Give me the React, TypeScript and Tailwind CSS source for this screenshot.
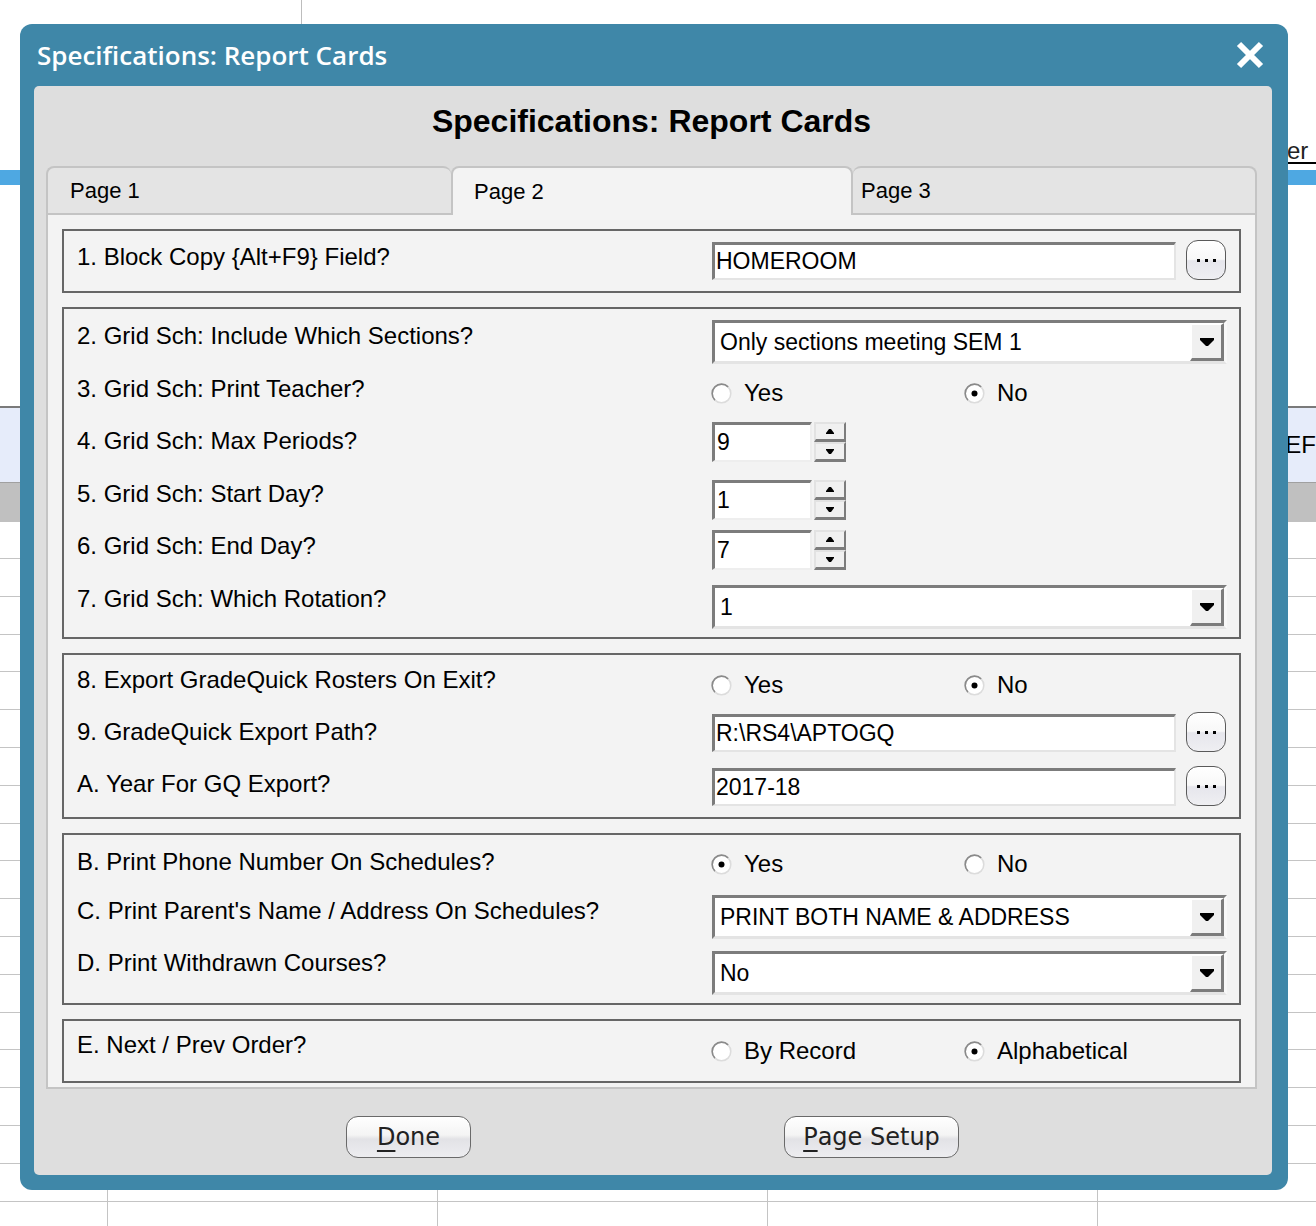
import React from "react";

const LABEL =
  "font-['Liberation_Sans',Arial,Helvetica,sans-serif] text-[24px] leading-[28px] text-black whitespace-nowrap";
const INPUT_TXT =
  "font-['Liberation_Sans',Arial,Helvetica,sans-serif] text-[23px] leading-none text-black whitespace-nowrap";

function DownArrow() {
  return (
    <svg width="14" height="8" viewBox="0 0 14 8">
      <polygon points="0,0 14,0 14,2 8,8 6,8 0,2" fill="#000" />
    </svg>
  );
}

function TextBox({ value, className }: { value: string; className: string }) {
  return (
    <div
      className={`flex h-[38px] items-center bg-white pl-[1px] border-t-[3px] border-l-[3px] border-t-[#7c7c7c] border-l-[#7c7c7c] border-b-2 border-r-2 border-b-[#e4e4e4] border-r-[#e4e4e4] ${INPUT_TXT} ${className}`}
    >
      {value}
    </div>
  );
}

function Ellipsis() {
  return (
    <div className="flex h-[40px] w-[40px] items-center justify-center gap-[5px] rounded-[12px] border-[1.5px] border-[#5a5a5a] bg-[linear-gradient(to_bottom,#ffffff_0%,#f8f8f8_48%,#e6e6ec_52%,#efeff2_100%)]">
      <span className="h-[3px] w-[3px] bg-black" />
      <span className="h-[3px] w-[3px] bg-black" />
      <span className="h-[3px] w-[3px] bg-black" />
    </div>
  );
}

function InputWithButton({ value }: { value: string }) {
  return (
    <div className="flex items-end gap-[10px]">
      <TextBox value={value} className="w-[464px]" />
      <Ellipsis />
    </div>
  );
}

function Dropdown({ value }: { value: string }) {
  return (
    <div className="flex h-[44px] w-[515px] border-t-[3px] border-l-[3px] border-t-[#7c7c7c] border-l-[#7c7c7c] border-b-[3px] border-r-[3px] border-b-[#e4e4e4] border-r-[#f8f8f8]">
      <div className={`flex flex-1 items-center bg-white pl-[5px] ${INPUT_TXT}`}>{value}</div>
      <div className="flex w-[34px] items-center justify-center bg-[#f0f0f0] border-t-2 border-l-2 border-t-white border-l-white border-r-[3px] border-b-[3px] border-r-[#7c7c7c] border-b-[#7c7c7c]">
        <DownArrow />
      </div>
    </div>
  );
}

function SpinBtn({ up }: { up: boolean }) {
  return (
    <div className="flex h-[20px] w-[32px] items-center justify-center bg-[#f0f0f0] border-t-2 border-l-2 border-t-[#e2e2e2] border-l-[#e2e2e2] border-r-2 border-b-[3px] border-r-[#7c7c7c] border-b-[#7c7c7c]">
      <svg width="8" height="5" viewBox="0 0 8 5">
        {up ? (
          <polygon points="3,0 5,0 8,4 8,5 0,5 0,4" fill="#000" />
        ) : (
          <polygon points="0,0 8,0 8,1 5,5 3,5 0,1" fill="#000" />
        )}
      </svg>
    </div>
  );
}

function Spinner({ value }: { value: string }) {
  return (
    <div className="flex gap-[2px]">
      <div className={`flex h-[40px] w-[100px] items-center bg-white pl-[2px] border-t-[3px] border-l-[3px] border-t-[#7c7c7c] border-l-[#7c7c7c] border-b-2 border-r-2 border-b-[#eeeeee] border-r-[#eeeeee] ${INPUT_TXT}`}>
        {value}
      </div>
      <div className="flex flex-col">
        <SpinBtn up />
        <SpinBtn up={false} />
      </div>
    </div>
  );
}

function Radio({ checked }: { checked: boolean }) {
  return (
    <svg width="21" height="21" viewBox="0 0 21 21" className="shrink-0">
      <circle cx="10.5" cy="10.5" r="9.3" fill="#ffffff" stroke="#dcdcdc" strokeWidth="1.6" />
      <path d="M3.9 17.1 A9.3 9.3 0 0 1 17.1 3.9" fill="none" stroke="#8a8a8a" strokeWidth="1.6" />
      {checked && <circle cx="10.5" cy="10.5" r="3" fill="#000" />}
    </svg>
  );
}

function RadioPair({
  a,
  b,
  which,
}: {
  a: string;
  b: string;
  which: 0 | 1;
}) {
  return (
    <div className="-ml-[1px] flex h-[28px] items-center">
      <div className="flex w-[253px] items-center gap-[12px]">
        <Radio checked={which === 0} />
        <span className={LABEL}>{a}</span>
      </div>
      <div className="flex items-center gap-[12px]">
        <Radio checked={which === 1} />
        <span className={LABEL}>{b}</span>
      </div>
    </div>
  );
}

function BigButton({ first, rest, className }: { first: string; rest: string; className: string }) {
  return (
    <div
      className={`flex h-[42px] items-center justify-center rounded-[12px] border-[1.5px] border-[#6a6a6a] bg-[linear-gradient(to_bottom,#ffffff_0%,#f4f4f4_45%,#e2e2e6_55%,#ededf0_100%)] font-['DejaVu_Sans',Verdana,sans-serif] text-[24px] leading-none text-[#222] ${className}`}
    >
      <span className="underline decoration-[1.5px] underline-offset-[5px]">{first}</span>
      <span>{rest}</span>
    </div>
  );
}

const BOX = "border-2 border-[#666666] bg-[#f3f3f3] pl-[13px]";

export default function App() {
  const gridRows = Array.from({ length: 18 });
  return (
    <div className="relative h-[1226px] w-[1316px] overflow-hidden bg-white font-['Liberation_Sans',Arial,sans-serif]">
      {/* background page */}
      <div className="flex h-[140px]">
        <div className="w-[301px]" />
        <div className="h-[24px] w-px bg-[#bdbdbd]" />
      </div>
      <div className="flex h-[24px]">
        <div className="w-[1287px]" />
        <div className="flex-1 border-b-2 border-black text-[24px] leading-[22px] text-[#222]">er</div>
      </div>
      <div className="h-[6px]" />
      <div className="h-[15px] bg-[#4ea8e2]" />
      <div className="h-[221px]" />
      <div className="h-[2px] bg-[#7a7a7a]" />
      <div className="flex h-[74px] items-center bg-[#e6ecfa]">
        <div className="w-[1281px]" />
        <span className="text-[24px] leading-none text-black">IEF</span>
      </div>
      <div className="h-px bg-[#a0a0a0]" />
      <div className="h-[39px] bg-[#c0c0c0]" />
      <div className="h-[36px]" />
      {gridRows.map((_, i) => (
        <div
          key={i}
          className="grid h-[37.8px] grid-cols-[108px_330px_330px_330px_1fr] border-t border-[#c4c4c4]"
        >
          <div className="border-r border-[#c4c4c4]" />
          <div className="border-r border-[#c4c4c4]" />
          <div className="border-r border-[#c4c4c4]" />
          <div className="border-r border-[#c4c4c4]" />
          <div />
        </div>
      ))}

      {/* dialog window */}
      <div className="absolute left-[20px] top-[24px] flex h-[1166px] w-[1268px] flex-col rounded-[12px] bg-[#3f87a8] pb-[15px] pl-[14px] pr-[16px]">
        <div className="flex h-[62px] shrink-0 items-center justify-between pl-[3px] pr-[8px]">
          <span className="font-['Open_Sans',sans-serif] text-[26px] font-semibold leading-none text-white">
            Specifications: Report Cards
          </span>
          <svg width="28" height="28" viewBox="0 0 28 28">
            <path d="M3 3 L25 25 M25 3 L3 25" stroke="#ffffff" strokeWidth="6" strokeLinecap="butt" />
          </svg>
        </div>

        <div className="flex h-[1089px] flex-col rounded-[5px] bg-[#dedede] pl-[12px] pr-[15px]">
          <div className="flex h-[80px] shrink-0 justify-center pt-[19px]">
            <span className="text-[32px] font-bold leading-[32px] text-black">Specifications: Report Cards</span>
          </div>

          {/* tabs */}
          <div className="flex h-[49px] shrink-0">
            <div className="flex w-[405px] items-center rounded-t-[8px] border-2 border-r-0 border-[#c4c4c4] bg-[#e4e4e4] pl-[22px] text-[22px] leading-none text-black">
              Page 1
            </div>
            <div className="flex w-[402px] items-center rounded-t-[8px] border-2 border-b-0 border-[#c4c4c4] bg-[#f3f3f3] pl-[21px] text-[22px] leading-none text-black">
              Page 2
            </div>
            <div className="flex w-[404px] items-center rounded-t-[8px] border-2 border-l-0 border-[#c4c4c4] bg-[#e4e4e4] pl-[8px] text-[22px] leading-none text-black">
              Page 3
            </div>
          </div>

          {/* content */}
          <div className="flex h-[874px] shrink-0 flex-col gap-[14px] border-2 border-t-0 border-[#c4c4c4] bg-[#f3f3f3] pl-[14px] pr-[14px] pt-[14px]">
            {/* box 1 */}
            <div className={`h-[64px] ${BOX}`}>
              <div className="flex h-[60px]">
                <div className={`w-[635px] mt-[12px] ${LABEL}`}>1. Block Copy {"{"}Alt+F9{"}"} Field?</div>
                <div className="mt-[9px]">
                  <InputWithButton value="HOMEROOM" />
                </div>
              </div>
            </div>

            {/* box 2 */}
            <div className={`h-[332px] ${BOX}`}>
              <div className="flex h-[52.5px]">
                <div className={`w-[635px] mt-[13px] ${LABEL}`}>2. Grid Sch: Include Which Sections?</div>
                <div className="mt-[11px]">
                  <Dropdown value="Only sections meeting SEM 1" />
                </div>
              </div>
              <div className="flex h-[52.5px]">
                <div className={`w-[635px] mt-[13px] ${LABEL}`}>3. Grid Sch: Print Teacher?</div>
                <div className="mt-[17.5px]">
                  <RadioPair a="Yes" b="No" which={1} />
                </div>
              </div>
              <div className="flex h-[52.5px]">
                <div className={`w-[635px] mt-[13px] ${LABEL}`}>4. Grid Sch: Max Periods?</div>
                <div className="mt-[8px]">
                  <Spinner value="9" />
                </div>
              </div>
              <div className="flex h-[52.5px]">
                <div className={`w-[635px] mt-[13px] ${LABEL}`}>5. Grid Sch: Start Day?</div>
                <div className="mt-[13.5px]">
                  <Spinner value="1" />
                </div>
              </div>
              <div className="flex h-[52.5px]">
                <div className={`w-[635px] mt-[13px] ${LABEL}`}>6. Grid Sch: End Day?</div>
                <div className="mt-[11px]">
                  <Spinner value="7" />
                </div>
              </div>
              <div className="flex h-[52.5px]">
                <div className={`w-[635px] mt-[13px] ${LABEL}`}>7. Grid Sch: Which Rotation?</div>
                <div className="mt-[13.5px]">
                  <Dropdown value="1" />
                </div>
              </div>
            </div>

            {/* box 3 */}
            <div className={`h-[166px] ${BOX}`}>
              <div className="flex h-[52px]">
                <div className={`w-[635px] mt-[11px] ${LABEL}`}>8. Export GradeQuick Rosters On Exit?</div>
                <div className="mt-[16px]">
                  <RadioPair a="Yes" b="No" which={1} />
                </div>
              </div>
              <div className="flex h-[52px]">
                <div className={`w-[635px] mt-[11px] ${LABEL}`}>9. GradeQuick Export Path?</div>
                <div className="mt-[5px]">
                  <InputWithButton value="R:\RS4\APTOGQ" />
                </div>
              </div>
              <div className="flex h-[52px]">
                <div className={`w-[635px] mt-[11px] ${LABEL}`}>A. Year For GQ Export?</div>
                <div className="mt-[7px]">
                  <InputWithButton value="2017-18" />
                </div>
              </div>
            </div>

            {/* box 4 */}
            <div className={`h-[172px] ${BOX}`}>
              <div className="flex h-[50px]">
                <div className={`w-[635px] mt-[13px] ${LABEL}`}>B. Print Phone Number On Schedules?</div>
                <div className="mt-[15px]">
                  <RadioPair a="Yes" b="No" which={0} />
                </div>
              </div>
              <div className="flex h-[52px]">
                <div className={`w-[635px] mt-[12px] ${LABEL}`}>C. Print Parent's Name / Address On Schedules?</div>
                <div className="mt-[10px]">
                  <Dropdown value="PRINT BOTH NAME & ADDRESS" />
                </div>
              </div>
              <div className="flex h-[52px]">
                <div className={`w-[635px] mt-[12px] ${LABEL}`}>D. Print Withdrawn Courses?</div>
                <div className="mt-[14px]">
                  <Dropdown value="No" />
                </div>
              </div>
            </div>

            {/* box 5 */}
            <div className={`h-[64px] ${BOX}`}>
              <div className="flex h-[60px]">
                <div className={`w-[635px] mt-[10px] ${LABEL}`}>E. Next / Prev Order?</div>
                <div className="mt-[16px]">
                  <RadioPair a="By Record" b="Alphabetical" which={1} />
                </div>
              </div>
            </div>
          </div>

          {/* buttons */}
          <div className="flex flex-1 items-start gap-[313px] pl-[300px] pt-[27px]">
            <BigButton first="D" rest="one" className="w-[125px]" />
            <BigButton first="P" rest="age Setup" className="w-[175px]" />
          </div>
        </div>
      </div>
    </div>
  );
}
